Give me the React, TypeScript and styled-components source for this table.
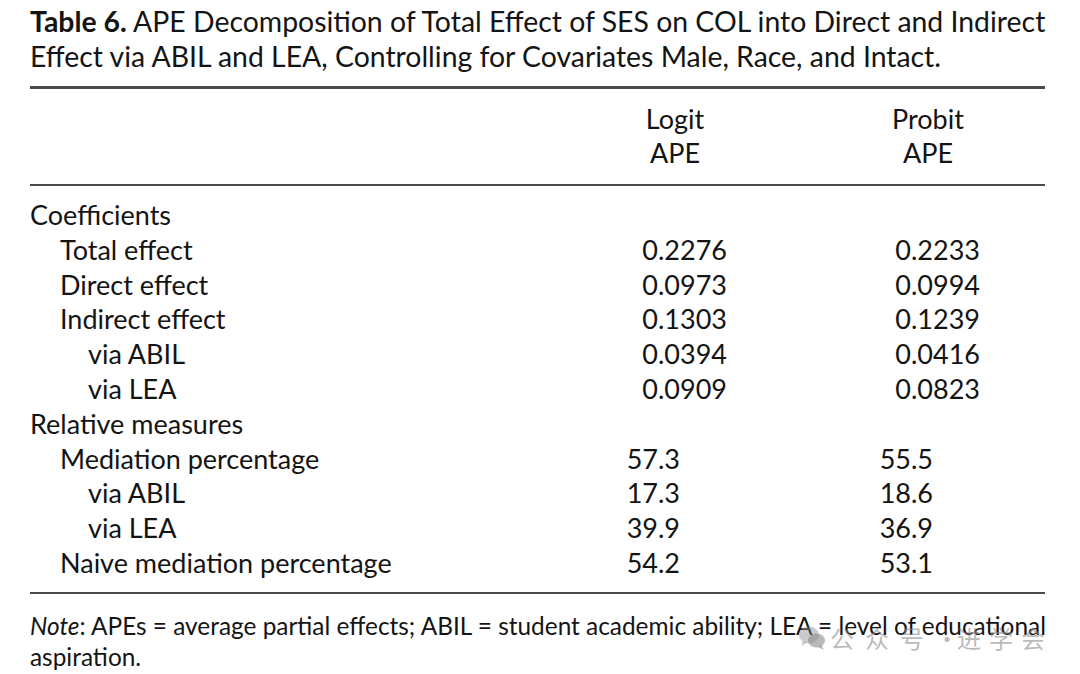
import React from "react";
import styled, { createGlobalStyle } from "styled-components";

const Global = createGlobalStyle`
  html, body { margin: 0; padding: 0; background: #ffffff; }
  body { font-family: Lato, "Noto Sans", "Noto Sans CJK SC", sans-serif; color: #141414; }
`;

const Page = styled.div`
  position: relative;
  width: 1080px;
  height: 674px;
  box-sizing: border-box;
  padding: 4px 35px 0 30px;
  overflow: hidden;
`;

const Title = styled.div`
  font-size: 28.4px;
  line-height: 35px;
  white-space: nowrap;
`;

const Bold = styled.span`
  font-weight: 700;
`;

const Rule = styled.div<{ $mt: number }>`
  margin-top: ${(p) => p.$mt}px;
  height: 2.5px;
  background: #4a4a4a;
`;

const Grid = styled.div`
  display: grid;
  grid-template-columns: 1fr 200px 200px;
  column-gap: 53px;
  padding-right: 17px;
`;

const Header = styled(Grid)`
  padding-top: 13px;
  padding-bottom: 14px;
  font-size: 27px;
  line-height: 34px;
`;

const HeadCell = styled.div`
  text-align: center;
`;

const Body = styled(Grid)`
  padding-top: 12px;
  padding-bottom: 11px;
  font-size: 27px;
  line-height: 34.8px;
  grid-auto-rows: 34.8px;
`;

const Label = styled.div<{ $level: number }>`
  padding-left: ${(p) => p.$level * 30 - (p.$level > 1 ? 2 : 0)}px;
  white-space: nowrap;
`;

const Num = styled.div`
  display: flex;
  white-space: nowrap;
`;

const IntPart = styled.span`
  width: 83px;
  text-align: right;
`;

const Note = styled.div`
  padding-top: 16px;
  font-size: 24.4px;
  line-height: 31px;
  white-space: nowrap;
`;

const Watermark = styled.div`
  position: absolute;
  left: 798px;
  top: 623px;
  display: flex;
  align-items: center;
  white-space: nowrap;
  color: rgba(140, 140, 140, 0.6);
  font-family: "Noto Sans CJK SC", sans-serif;
  font-size: 24px;
  line-height: 30px;
  pointer-events: none;
`;

const WmIcon = styled.svg`
  width: 28px;
  height: 26px;
  margin-right: 4px;
`;

const WmWords = styled.span<{ $sp: number }>`
  letter-spacing: ${(p) => p.$sp}px;
`;

const WmDot = styled.span`
  width: 8px;
  margin-right: 14px;
  text-align: center;
`;

type Row = { label: string; level: number; logit?: string; probit?: string };

const rows: Row[] = [
  { label: "Coefficients", level: 0 },
  { label: "Total effect", level: 1, logit: "0.2276", probit: "0.2233" },
  { label: "Direct effect", level: 1, logit: "0.0973", probit: "0.0994" },
  { label: "Indirect effect", level: 1, logit: "0.1303", probit: "0.1239" },
  { label: "via ABIL", level: 2, logit: "0.0394", probit: "0.0416" },
  { label: "via LEA", level: 2, logit: "0.0909", probit: "0.0823" },
  { label: "Relative measures", level: 0 },
  { label: "Mediation percentage", level: 1, logit: "57.3", probit: "55.5" },
  { label: "via ABIL", level: 2, logit: "17.3", probit: "18.6" },
  { label: "via LEA", level: 2, logit: "39.9", probit: "36.9" },
  { label: "Naive mediation percentage", level: 1, logit: "54.2", probit: "53.1" },
];

const Value: React.FC<{ v?: string }> = ({ v }) => {
  if (!v) return <Num />;
  const i = v.indexOf(".");
  return (
    <Num>
      <IntPart>{v.slice(0, i)}</IntPart>
      <span>{v.slice(i)}</span>
    </Num>
  );
};

const WeChat = () => (
  <WmIcon viewBox="0 0 28 26" aria-hidden="true">
    <ellipse cx="11" cy="10" rx="10" ry="8.5" fill="rgba(140,140,140,0.45)" />
    <path d="M5 16 L3.5 21 L9 17.5 Z" fill="rgba(140,140,140,0.45)" />
    <ellipse cx="18.5" cy="15.5" rx="8.5" ry="7" fill="rgba(140,140,140,0.6)" />
    <path d="M23.5 20 L26 25 L20 22 Z" fill="rgba(140,140,140,0.6)" />
  </WmIcon>
);

export default function App() {
  return (
    <>
      <Global />
      <Page>
        <Title>
          <Bold>Table 6.</Bold> APE Decomposition of Total Effect of SES on COL into Direct and Indirect
          <br />
          Effect via ABIL and LEA, Controlling for Covariates Male, Race, and Intact.
        </Title>
        <Rule $mt={12} />
        <Header>
          <div />
          <HeadCell>
            Logit
            <br />
            APE
          </HeadCell>
          <HeadCell>
            Probit
            <br />
            APE
          </HeadCell>
        </Header>
        <Rule $mt={0} />
        <Body>
          {rows.map((r, idx) => (
            <React.Fragment key={idx}>
              <Label $level={r.level}>{r.label}</Label>
              <Value v={r.logit} />
              <Value v={r.probit} />
            </React.Fragment>
          ))}
        </Body>
        <Rule $mt={0} />
        <Note>
          <i>Note</i>: APEs = average partial effects; ABIL = student academic ability; LEA = level of educational
          <br />
          aspiration.
        </Note>
        <Watermark>
          <WeChat />
          <WmWords $sp={11}>公众号</WmWords>
          <WmDot>·</WmDot>
          <WmWords $sp={8}>进学会</WmWords>
        </Watermark>
      </Page>
    </>
  );
}
